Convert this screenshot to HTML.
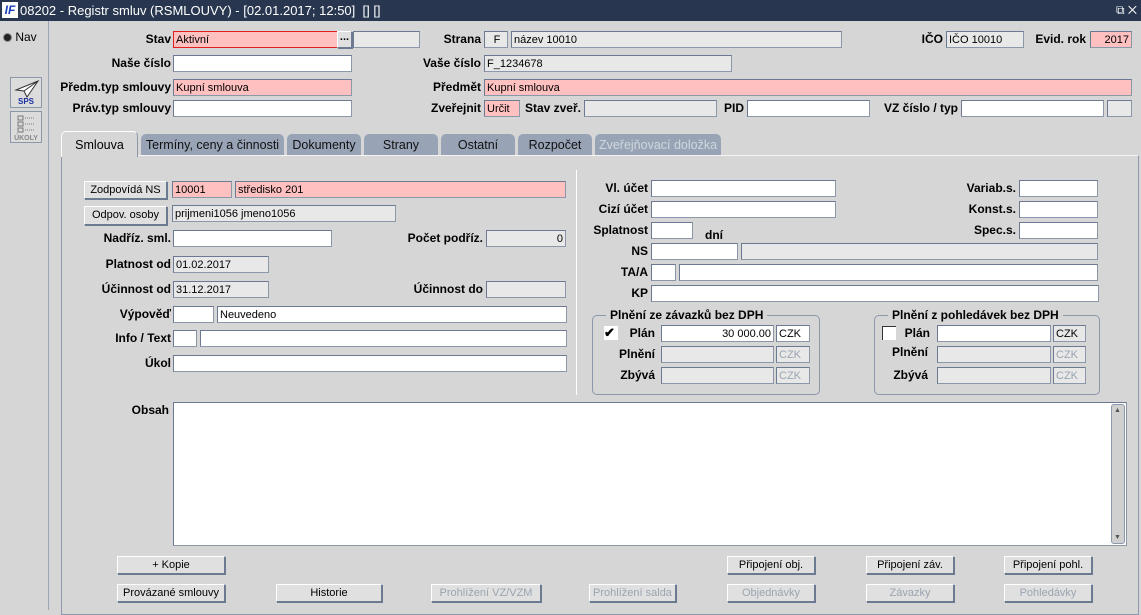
<!DOCTYPE html>
<html><head><meta charset="utf-8"><style>
*{box-sizing:border-box;margin:0;padding:0}
body{width:1141px;height:610px;overflow:hidden;background:#d6d6d6;font-family:"Liberation Sans",Arial,sans-serif;font-size:12px;color:#000;position:relative}
div{position:absolute}
.t{left:0;top:0;width:1141px;height:21px;background:#28374f;color:#fff;font-size:13px;line-height:21px}
.i{background:#fff;border:1px solid #8a98aa;border-top-color:#6b7a90;border-left-color:#6b7a90;height:17px;line-height:16px;padding-left:2px;white-space:nowrap;overflow:hidden;font-size:11px}
.p{background:#ffc0c0}
.g{background:#e8e8e8}
.r{text-align:right;padding-right:2px}
.l{font-weight:bold;text-align:right;white-space:nowrap;line-height:17px}
.b{background:#e0e0e0;border:1px solid #6b7a90;border-top-color:#fff;border-left-color:#fff;box-shadow:1px 1px 0 #6b7a90;text-align:center;line-height:16px;height:18px;font-size:11px}
.d{color:#9aa4b0}
.tab{top:134px;height:22px;background:#98a4b6;border-radius:5px 5px 0 0;text-align:center;line-height:22px;font-size:12.5px;color:#111}
.fs{border:1px solid #8a98aa;border-radius:5px}
.lg{background:#d6d6d6;font-weight:bold;padding:0 4px;line-height:14px}
</style></head><body>
<div class="t"><span style="position:absolute;left:2px;top:2px;width:16px;height:16px;background:#fff;color:#1a3fbf;font-weight:bold;font-style:italic;font-size:12px;line-height:16px;text-align:center">IF</span><span style="position:absolute;left:20px">08202 - Registr smluv (RSMLOUVY) - [02.01.2017; 12:50]&nbsp; [] []</span><span style="position:absolute;right:4px;font-size:12px">⧉ ✕</span></div>

<div style="left:3px;top:30px;width:44px;height:14px;line-height:14px;font-size:12px"><span style="display:inline-block;width:9px;height:9px;border-radius:50%;background:#222;border:1px solid #888;vertical-align:-1px"></span> Nav</div>
<div style="left:48px;top:21px;width:1px;height:589px;background:#9aa6b6"></div>
<div style="left:10px;top:77px;width:32px;height:31px;background:#dcdcdc;border:1px solid #8a98aa;font-size:8px;color:#1a2fa0;font-weight:bold;text-align:center;line-height:8px;padding-top:20px">SPS<svg style="position:absolute;left:3px;top:2px" width="26" height="18"><path d="M2 10 L24 1 L13 17 L10 11 Z M10 11 L24 1" fill="#fff" stroke="#333" stroke-width="1"/></svg></div>
<div style="left:10px;top:111px;width:32px;height:32px;background:#dcdcdc;border:1px solid #8a98aa;font-size:7px;color:#888;font-weight:bold;text-align:center;line-height:8px;padding-top:23px">ÚKOLY<svg style="position:absolute;left:6px;top:2px" width="20" height="20"><g fill="none" stroke="#777"><rect x="1" y="2" width="5" height="4"/><rect x="1" y="8" width="5" height="4"/><rect x="1" y="14" width="5" height="4"/><path d="M8 4h10M8 10h10M8 16h10" stroke-dasharray="1 1"/></g></svg></div>

<div class="l" style="left:60px;width:111px;top:31px">Stav</div>
<div class="i p" style="left:173px;top:31px;width:165px;border:1px solid #e02020">Aktivní</div>
<div class="b" style="left:337px;top:31px;width:15px;height:17px;line-height:10px;font-weight:bold">...</div>
<div class="i g" style="left:353px;top:31px;width:67px"></div>
<div class="l" style="left:400px;width:81px;top:31px">Strana</div>
<div class="i g" style="left:484px;top:31px;width:24px;text-align:center">F</div>
<div class="i g" style="left:511px;top:31px;width:331px">název 10010</div>
<div class="l" style="left:880px;width:63px;top:31px">IČO</div>
<div class="i g" style="left:946px;top:31px;width:78px">IČO 10010</div>
<div class="l" style="left:1030px;width:56px;top:31px">Evid. rok</div>
<div class="i p r" style="left:1090px;top:31px;width:42px">2017</div>

<div class="l" style="left:60px;width:111px;top:55px">Naše číslo</div>
<div class="i" style="left:173px;top:55px;width:179px"></div>
<div class="l" style="left:380px;width:101px;top:55px">Vaše číslo</div>
<div class="i g" style="left:484px;top:55px;width:248px">F_1234678</div>

<div class="l" style="left:50px;width:121px;top:79px">Předm.typ smlouvy</div>
<div class="i p" style="left:173px;top:79px;width:179px">Kupní smlouva</div>
<div class="l" style="left:380px;width:101px;top:79px">Předmět</div>
<div class="i p" style="left:484px;top:79px;width:648px">Kupní smlouva</div>

<div class="l" style="left:50px;width:121px;top:100px">Práv.typ smlouvy</div>
<div class="i" style="left:173px;top:100px;width:179px"></div>
<div class="l" style="left:380px;width:101px;top:100px">Zveřejnit</div>
<div class="i p" style="left:484px;top:100px;width:36px">Určit</div>
<div class="l" style="left:520px;width:61px;top:100px">Stav zveř.</div>
<div class="i g" style="left:584px;top:100px;width:133px"></div>
<div class="l" style="left:720px;width:24px;top:100px">PID</div>
<div class="i" style="left:747px;top:100px;width:123px"></div>
<div class="l" style="left:870px;width:88px;top:100px">VZ číslo / typ</div>
<div class="i" style="left:961px;top:100px;width:143px"></div>
<div class="i g" style="left:1107px;top:100px;width:25px"></div>

<div class="tab" style="left:141px;width:143px">Termíny, ceny a činnosti</div>
<div class="tab" style="left:287px;width:74px">Dokumenty</div>
<div class="tab" style="left:364px;width:74px">Strany</div>
<div class="tab" style="left:441px;width:74px">Ostatní</div>
<div class="tab" style="left:518px;width:74px">Rozpočet</div>
<div class="tab" style="left:595px;width:126px;color:#d0d6de">Zveřejňovací doložka</div>
<div style="left:61px;top:155px;width:1078px;height:460px;border:1px solid #8a98aa;border-top:1px solid #f4f4f4"></div>
<div style="left:61px;top:131px;width:77px;height:26px;background:#d6d6d6;border:1px solid #8a98aa;border-bottom:none;border-top-color:#fff;border-left-color:#fff;border-radius:5px 5px 0 0;text-align:center;line-height:26px;font-size:12.5px">Smlouva</div>

<div class="b" style="left:84px;top:181px;width:83px">Zodpovídá NS</div>
<div class="i p" style="left:172px;top:181px;width:60px">10001</div>
<div class="i p" style="left:235px;top:181px;width:331px">středisko 201</div>
<div class="b" style="left:84px;top:206px;width:83px;height:19px">Odpov. osoby</div>
<div class="i g" style="left:172px;top:205px;width:224px">prijmeni1056 jmeno1056</div>
<div class="l" style="left:70px;width:101px;top:230px">Nadříz. sml.</div>
<div class="i" style="left:173px;top:230px;width:159px"></div>
<div class="l" style="left:380px;width:103px;top:230px">Počet podříz.</div>
<div class="i g r" style="left:486px;top:230px;width:80px">0</div>
<div class="l" style="left:70px;width:101px;top:256px">Platnost od</div>
<div class="i g" style="left:173px;top:256px;width:96px">01.02.2017</div>
<div class="l" style="left:70px;width:101px;top:281px">Účinnost od</div>
<div class="i g" style="left:173px;top:281px;width:96px">31.12.2017</div>
<div class="l" style="left:380px;width:103px;top:281px">Účinnost do</div>
<div class="i g" style="left:486px;top:281px;width:80px"></div>
<div class="l" style="left:70px;width:101px;top:306px">Výpověď</div>
<div class="i" style="left:173px;top:306px;width:41px"></div>
<div class="i" style="left:217px;top:306px;width:350px">Neuvedeno</div>
<div class="l" style="left:70px;width:101px;top:330px">Info / Text</div>
<div class="i" style="left:173px;top:330px;width:24px"></div>
<div class="i" style="left:200px;top:330px;width:367px"></div>
<div class="l" style="left:70px;width:101px;top:355px">Úkol</div>
<div class="i" style="left:173px;top:355px;width:394px"></div>
<div style="left:576px;top:170px;width:1px;height:225px;background:#8a98aa;border-right:1px solid #fff"></div>

<div class="l" style="left:590px;width:58px;top:180px">Vl. účet</div>
<div class="i" style="left:651px;top:180px;width:185px"></div>
<div class="l" style="left:590px;width:58px;top:201px">Cizí účet</div>
<div class="i" style="left:651px;top:201px;width:185px"></div>
<div class="l" style="left:580px;width:68px;top:222px">Splatnost</div>
<div class="i" style="left:651px;top:222px;width:42px"></div>
<div class="l" style="left:705px;width:24px;top:227px;text-align:left">dní</div>
<div class="l" style="left:590px;width:58px;top:243px">NS</div>
<div class="i" style="left:651px;top:243px;width:87px"></div>
<div class="i g" style="left:741px;top:243px;width:357px"></div>
<div class="l" style="left:590px;width:58px;top:264px">TA/A</div>
<div class="i" style="left:651px;top:264px;width:25px"></div>
<div class="i" style="left:679px;top:264px;width:419px"></div>
<div class="l" style="left:590px;width:58px;top:285px">KP</div>
<div class="i" style="left:651px;top:285px;width:448px"></div>
<div class="l" style="left:950px;width:66px;top:180px">Variab.s.</div>
<div class="i" style="left:1019px;top:180px;width:79px"></div>
<div class="l" style="left:950px;width:66px;top:201px">Konst.s.</div>
<div class="i" style="left:1019px;top:201px;width:79px"></div>
<div class="l" style="left:950px;width:66px;top:222px">Spec.s.</div>
<div class="i" style="left:1019px;top:222px;width:79px"></div>

<div class="fs" style="left:592px;top:315px;width:228px;height:80px"></div>
<div class="lg" style="left:606px;top:308px">Plnění ze závazků bez DPH</div>
<div style="left:604px;top:326px;width:14px;height:14px;background:#fff;font-size:13px;line-height:13px;font-weight:bold">✔</div>
<div class="l" style="left:620px;width:35px;top:325px">Plán</div>
<div class="i r" style="left:661px;top:325px;width:113px">30 000.00</div>
<div class="i" style="left:776px;top:325px;width:34px">CZK</div>
<div class="l" style="left:600px;width:55px;top:346px">Plnění</div>
<div class="i g" style="left:661px;top:346px;width:113px"></div>
<div class="i g d" style="left:776px;top:346px;width:34px">CZK</div>
<div class="l" style="left:600px;width:55px;top:367px">Zbývá</div>
<div class="i g" style="left:661px;top:367px;width:113px"></div>
<div class="i g d" style="left:776px;top:367px;width:34px">CZK</div>

<div class="fs" style="left:874px;top:315px;width:226px;height:80px"></div>
<div class="lg" style="left:888px;top:308px">Plnění z pohledávek bez DPH</div>
<div style="left:882px;top:326px;width:14px;height:14px;background:#fff;border-left:1px solid #333;border-top:1px solid #333"></div>
<div class="l" style="left:895px;width:35px;top:325px">Plán</div>
<div class="i" style="left:937px;top:325px;width:114px"></div>
<div class="i g" style="left:1053px;top:325px;width:33px">CZK</div>
<div class="l" style="left:870px;width:58px;top:344px">Plnění</div>
<div class="i g" style="left:937px;top:346px;width:114px"></div>
<div class="i g d" style="left:1053px;top:346px;width:33px">CZK</div>
<div class="l" style="left:870px;width:58px;top:367px">Zbývá</div>
<div class="i g" style="left:937px;top:367px;width:114px"></div>
<div class="i g d" style="left:1053px;top:367px;width:33px">CZK</div>

<div class="l" style="left:100px;width:69px;top:402px">Obsah</div>
<div class="i" style="left:173px;top:402px;width:954px;height:144px"></div>
<div style="left:1111px;top:404px;width:14px;height:140px;background:#d0d0d0;border:1px solid #8a98aa;border-radius:3px"><div style="left:2px;top:2px;font-size:7px;color:#555">▲</div><div style="left:2px;bottom:2px;font-size:7px;color:#555">▼</div></div>

<div class="b" style="left:117px;top:556px;width:108px">+ Kopie</div>
<div class="b" style="left:727px;top:556px;width:88px">Připojení obj.</div>
<div class="b" style="left:866px;top:556px;width:88px">Připojení záv.</div>
<div class="b" style="left:1004px;top:556px;width:88px">Připojení pohl.</div>
<div class="b" style="left:117px;top:584px;width:108px">Provázané smlouvy</div>
<div class="b" style="left:276px;top:584px;width:106px">Historie</div>
<div class="b d" style="left:431px;top:584px;width:110px">Prohlížení VZ/VZM</div>
<div class="b d" style="left:589px;top:584px;width:87px">Prohlížení salda</div>
<div class="b d" style="left:727px;top:584px;width:88px">Objednávky</div>
<div class="b d" style="left:866px;top:584px;width:88px">Závazky</div>
<div class="b d" style="left:1004px;top:584px;width:88px">Pohledávky</div>
</body></html>
